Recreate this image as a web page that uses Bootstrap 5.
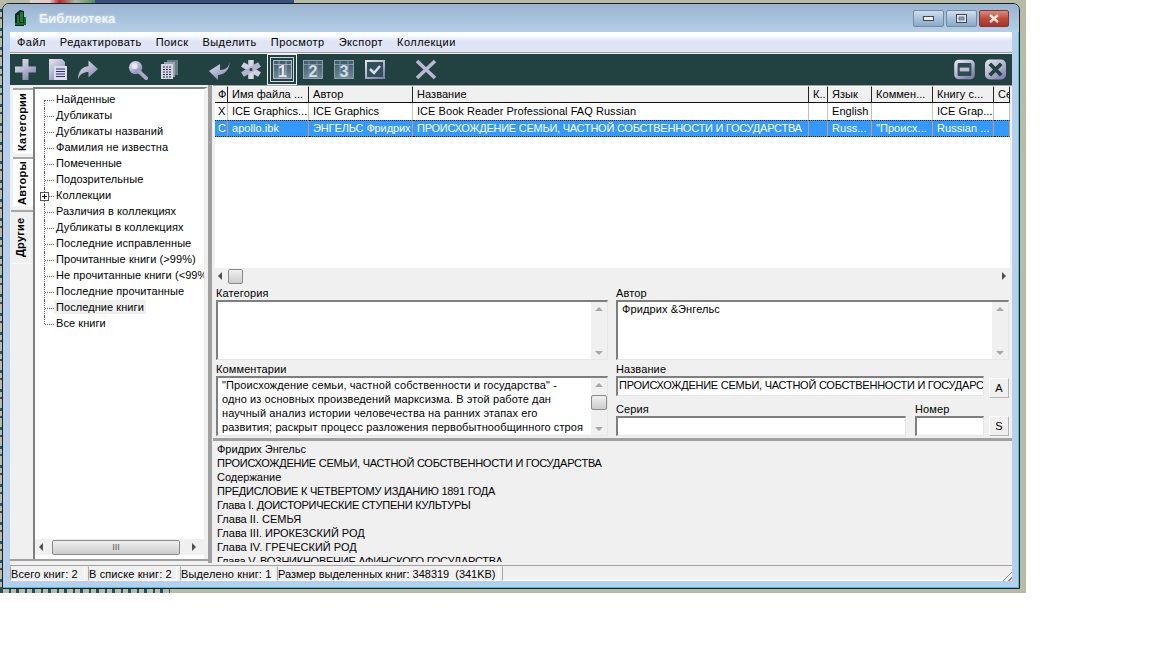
<!DOCTYPE html>
<html lang="ru">
<head>
<meta charset="utf-8">
<title>Библиотека</title>
<link href="https://cdn.jsdelivr.net/npm/bootstrap@5.3.0/dist/css/bootstrap.min.css" rel="stylesheet">
<style>
html,body{margin:0;background:#fff;}
body{font:11px/14px "Liberation Sans",Arial,sans-serif;color:#000;width:1152px;height:648px;overflow:hidden;}
.desk{position:relative;width:1026px;height:593px;background:#b8bca6;padding:3px 0 0 2px;overflow:hidden;}
.bg-left{position:absolute;left:0;top:0;width:2px;height:593px;background:repeating-linear-gradient(180deg,#b8bca6 0 9px,#1f5a66 9px 12px,#b8bca6 12px 17px,#33505c 17px 19px);}
.bg-top1{position:absolute;left:30px;top:0;width:65px;height:3px;background:linear-gradient(90deg,#d9d6cc,#e8c8c8 30%,#b22a2a 45%,#a8b8a0 70%,#4e8a5a);}
.bg-top2{position:absolute;left:95px;top:0;width:199px;height:3px;background:#35507a;}
.bg-bot{position:absolute;left:0;top:589px;width:170px;height:4px;background:repeating-linear-gradient(90deg,#1f4f60 0 3px,#b8bca6 3px 9px,#1f4f60 9px 11px,#b8bca6 11px 16px);}
.win{position:relative;width:1018px;height:586px;border:1px solid #1a2026;border-radius:7px 7px 0 0;background:#b6cfec;box-shadow:inset -1px -1px 0 #3fc6e0;padding:0 7px;}
.cap{height:28px;background:linear-gradient(180deg,#9ab4cf,#b5cfe9);margin:0 -7px;padding:0 10px 0 11px;border-radius:6px 6px 0 0;}
.cap-title{font-size:13px;font-weight:700;color:#eef4fa;margin-left:12px;text-shadow:0 0 3px #cfe0f0;padding-top:1px;}
.ctl{height:17px;border:1px solid #6f8aa3;border-radius:2px;background:linear-gradient(180deg,#cfdfee,#a9c2da 50%,#8ca9c4);}
.ctl-min{width:31px;}.ctl-max{width:31px;margin-left:2px;}
.ctl-close{width:30px;margin-left:2px;background:linear-gradient(180deg,#d98c80,#c04a3c 50%,#a83428);border-color:#7c3a34;}
.client{width:1002px;height:549px;background:#f0f0f0;}
.menu{height:20px;background:linear-gradient(180deg,#fff 0,#fff 3px,#dfe5f5 9px,#dfe5f5 100%);font-size:11px;}
.menu span{padding:0 7px;letter-spacing:.45px;line-height:21px;}
.menu-sep{height:2px;background:linear-gradient(180deg,#9d9d9d 0 1px,#f0f0f0 1px);}
.tools{height:31px;background:#224242;padding:0 6px 0 5px;}
.tools svg{display:block;flex:none;}
.m-6{margin-left:6px}.m-9{margin-left:9px}.m-10{margin-left:10px}.m-11{margin-left:11px}.m-12{margin-left:12px}.m-13{margin-left:13px}.m-30{margin-left:30px}.m-31{margin-left:31px}
.pressed{width:30px;height:31px;border:1px solid #e9eef0;box-shadow:inset 0 0 0 2px #224242,inset 0 0 0 3px #cfd8dc;margin-left:5px;}
.main{height:480px;}
.left{width:198px;height:476px;border-bottom:2px solid #a0a0a0;}
.tabs{width:23px;padding-top:3px;}
.vt{width:20px;margin-left:3px;background:#fff;border-top:1px solid #f8f8f8;border-bottom:2px solid #a8a8a8;writing-mode:vertical-rl;transform:rotate(180deg);text-align:center;font-weight:700;letter-spacing:.25px;line-height:18px;}
.vt-1{height:66px;}.vt-2{height:50px;margin-top:3px;}
.vt-3{height:54px;margin-left:1px;width:22px;background:#f0f0f0;margin-top:3px;}
.tree{width:175px;height:472px;margin-top:2px;border-top:2px solid #7f7f7f;border-left:2px solid #7f7f7f;border-right:4px solid #f0f0f0;background:#fff;}
.tree-list{list-style:none;margin:0;padding:3px 0 0 0;flex:1 1 auto;position:relative;}
.tree-list li{position:relative;height:16px;line-height:15px;padding-left:21px;letter-spacing:.07px;white-space:nowrap;width:169px;}
.tree-list li::before{content:"";position:absolute;left:9px;top:0;height:16px;border-left:1px dotted #666;}
.tree-list li:first-child::before{top:8px;height:8px;}
.tree-list li:last-child::before{height:8px;}
.tree-list li::after{content:"";position:absolute;left:10px;top:8px;width:9px;border-top:1px dotted #666;}
.tree-list li b{font-weight:400;padding:1px 2px;margin-left:-2px;}
.cur{background:#f0f0f0;}
.plus{position:absolute;z-index:2;left:5px;top:4px;width:9px;height:9px;border:1px solid #555;background:linear-gradient(#000,#000) center/1px 5px no-repeat,linear-gradient(#000,#000) center/5px 1px no-repeat,#fff;}
.hsb{height:16px;background:#f0f0f0;}
.arr-l,.arr-r,.arr-u,.arr-d{width:0;height:0;flex:none;}
.arr-l{border:4px solid transparent;border-left:0;border-right:4px solid #505050;}
.arr-r{border:4px solid transparent;border-right:0;border-left:4px solid #505050;}
.arr-u{border:4px solid transparent;border-top:0;border-bottom:4px solid #a8a8a8;}
.arr-d{border:4px solid transparent;border-bottom:0;border-top:4px solid #a8a8a8;margin-top:auto;}
.thumb{height:15px;border:1px solid #8a8a8a;border-radius:2px;background:linear-gradient(180deg,#f0f0f0,#cccccc);}
.thumb-long{width:128px;margin-left:9px;text-align:center;line-height:12px;font-size:9px;color:#555;}
.thumb-sm{width:15px;margin-left:6px;}
.thumb-c{margin-top:8px;}
.split{width:5px;background:linear-gradient(90deg,#a0a0a0 0 4px,#f0f0f0 4px);height:478px;}
.right{width:799px;}
.grid-wrap{height:183px;background:#f0f0f0;padding:0 2px;border-top:1px solid #a0a0a0;}
.grid-in{height:182px;background:#fff;overflow:hidden;}
table.g{table-layout:fixed;width:795px;border-collapse:separate;border-spacing:0;margin:0;}
table.g col.c1{width:13px}table.g col.c2{width:81px}table.g col.c3{width:104px}table.g col.c4{width:396px}table.g col.c5{width:19px}table.g col.c6{width:44px}table.g col.c7{width:61px}table.g col.c8{width:61px}table.g col.c9{width:16px}
table.g th,table.g td{font-weight:400;padding:0 0 0 4px;height:17px;line-height:15px;white-space:nowrap;overflow:hidden;letter-spacing:.05px;}
table.g th:first-child,table.g td:first-child{padding-left:3px;}
table.g th{background:#f0f0f0;border-right:1px solid #222;border-bottom:1px solid #111;border-top:1px solid #fff;}
table.g td{border-right:1px solid #c0c0c0;}
table.g tr.sel td{background:#3399ff;color:#fff;border-right-color:#d09a70;border-top:1px dotted #222;border-bottom:1px dotted #222;}
.caps{letter-spacing:-.25px;}
.caps-s{letter-spacing:-.12px;}
.hsb2{height:16px;background:#f0f0f0;padding-left:5px;padding-right:6px;}
.form{height:154px;padding-left:3px;}
.fl{width:392px;}.fr{width:393px;margin-left:8px;}
.lab{height:16px;padding-top:2px;line-height:14px;letter-spacing:.12px;}
.lab2{height:14px;margin-top:2px;line-height:14px;letter-spacing:.12px;}
.lab3{height:14px;margin-top:6px;line-height:14px;letter-spacing:.12px;}
.box{border-top:2px solid #7f7f7f;border-left:2px solid #7f7f7f;border-right:1px solid #e6e6e6;border-bottom:1px solid #e6e6e6;background:#fff;}
.area{height:60px;overflow:hidden;}
.area-txt{padding:0 0 0 4px;line-height:14px;letter-spacing:.1px;white-space:nowrap;}
.vsb{width:16px;flex:none;background:#f0f0f0;padding:5px 0 4px;}
.inp{height:20px;line-height:15px;overflow:hidden;white-space:nowrap;padding-left:1px;}
.inp-n{width:368px;}.inp-s{width:290px;}.inp-c{width:69px;margin-left:9px;}
.row20{height:20px;}
.sq{width:20px;height:20px;margin-left:5px;background:#f0f0f0;border:1px solid #b5b5b5;border-top-color:#fff;border-left-color:#fff;text-align:center;line-height:19px;}
.sq-a{margin-top:2px;}
.l-c{width:299px;}
.hs{height:3px;background:#a0a0a0;}
.pane{height:121px;padding:1px 0 0 4px;overflow:hidden;line-height:14px;white-space:nowrap;background:#f0f0f0;}
.status{height:16px;border-top:1px solid #a0a0a0;position:relative;}
.status .p{height:15px;line-height:14px;margin-right:3px;border-left:1px solid #a8a8a8;border-top:1px solid #f0f0f0;border-right:1px solid #fff;border-bottom:1px solid #fff;letter-spacing:.12px;white-space:nowrap;overflow:hidden;flex:none;}
.status .p4{letter-spacing:-.02px;}
.p1{width:75px}.p2{width:89px}.p3{width:94px}.p4{width:222px}.p5{width:510px;margin-right:0!important}
.grip{position:absolute;right:0;bottom:0;width:12px;height:12px;background:repeating-linear-gradient(135deg,transparent 0 2px,#8f8f8f 2px 3px,transparent 3px 4px);clip-path:polygon(100% 0,100% 100%,0 100%);}
</style>
</head>
<body>
<svg width="0" height="0" class="position-absolute"><defs>
<linearGradient id="ic" x1="0" y1="0" x2="0.7" y2="1"><stop offset="0" stop-color="#e6e6ee"/><stop offset="0.55" stop-color="#b6b6d2"/><stop offset="1" stop-color="#8484b0"/></linearGradient>
<linearGradient id="ik" x1="0" y1="0" x2="0" y2="1"><stop offset="0" stop-color="#3a5a68"/><stop offset="1" stop-color="#6f8894"/></linearGradient>
</defs></svg>
<div class="desk">
  <div class="bg-left"></div><div class="bg-top1"></div><div class="bg-top2"></div><div class="bg-bot"></div>
  <div class="win">
    <div class="cap d-flex align-items-center">
      <svg width="13" height="18" viewBox="0 0 13 18"><path d="M1 5 L6 1 L10 2 V17 H1Z" fill="#0f2a1a"/><path d="M3 6 H5 V14 H3Z M6 3 L9 3 V13 H6Z" fill="#177a3c"/><path d="M1 16 H12 V8 H10 V14 H1Z" fill="#126a32"/></svg>
      <span class="cap-title">Библиотека</span>
      <div class="ms-auto d-flex">
        <div class="ctl ctl-min d-flex align-items-center justify-content-center"><svg width="11" height="5"><rect x=".5" y=".5" width="10" height="4" fill="#e8eef4" stroke="#445"/></svg></div>
        <div class="ctl ctl-max d-flex align-items-center justify-content-center"><svg width="11" height="9"><rect x=".5" y=".5" width="10" height="8" fill="#dde6f0" stroke="#445"/><rect x="3" y="3" width="5" height="3" fill="#8ca9c4" stroke="#445" stroke-width=".6"/></svg></div>
        <div class="ctl ctl-close d-flex align-items-center justify-content-center"><svg width="12" height="9" viewBox="0 0 12 9"><path d="M2 1 L10 8 M10 1 L2 8" stroke="#f1e6e0" stroke-width="2.4"/></svg></div>
      </div>
    </div>
    <div class="client">
      <div class="menu d-flex"><span>Файл</span><span>Редактировать</span><span>Поиск</span><span>Выделить</span><span>Просмотр</span><span>Экспорт</span><span>Коллекции</span></div>
      <div class="menu-sep"></div>
      <div class="tools d-flex align-items-center">
        <svg width="21" height="21" viewBox="0 0 21 21"><path d="M7.5 0h6v7.5H21v6h-7.5V21h-6v-7.5H0v-6h7.5z" fill="url(#ic)"/></svg>
        <svg class="m-12" width="19" height="21" viewBox="0 0 19 21"><path d="M1 0h13l3 3v4H6v14H1z" fill="url(#ic)"/><path d="M6 7h13v14H6z" fill="#dcdcec"/><path d="M8 10h9M8 12.5h9M8 15h9M8 17.5h9" stroke="#2e2e6a" stroke-width="1"/></svg>
        <svg class="m-10" width="21" height="21" viewBox="0 0 22 21"><path d="M1 21C1 11 7 7 12 7V1l10 9-10 9v-6C7 13 3 15 1 21z" fill="url(#ic)"/></svg>
        <svg class="m-30" width="20" height="20" viewBox="0 0 21 20"><circle cx="8" cy="7.5" r="7" fill="url(#ic)"/><circle cx="7" cy="6" r="3" fill="#e8e8f2"/><path d="M12 12l7 6.5" stroke="#a8a8c8" stroke-width="4" stroke-linecap="round"/></svg>
        <svg class="m-13" width="17" height="19" viewBox="0 0 17 19"><rect x="6" y="0" width="11" height="15" fill="#6a7c8a"/><rect x="3" y="2" width="11" height="15" fill="#9aa4b0"/><rect x="0" y="4" width="12" height="15" fill="#d6d6e2"/><path d="M2 7h8M2 9.5h8M2 12h8M2 14.500h8M2 17h8" stroke="#2a2a50" stroke-width="1" stroke-dasharray="2 1"/></svg>
        <svg class="m-31" width="22" height="21" viewBox="0 0 22 21"><path d="M21 1C21 8 16 11 11 11V5L0 12l9 9v-5c6 0 12-5 12-15z" fill="url(#ic)"/></svg>
        <svg class="m-9" width="22" height="21" viewBox="0 0 22 21"><path d="M11 1V20" stroke="#d6d6e6" stroke-width="5.500"/><path d="M2.500 5.500L19.500 15.500" stroke="#d0d0e2" stroke-width="5.500"/><path d="M19.500 5.500L2.500 15.500" stroke="#b4b4d0" stroke-width="5.500"/><circle cx="11" cy="10.500" r="1.500" fill="#224242"/></svg>
        <div class="pressed d-flex align-items-center justify-content-center">
          <svg width="19" height="19" viewBox="0 0 19 19"><rect x=".5" y=".5" width="18" height="18" fill="url(#ik)" stroke="#b6b6d2"/><path d="M0 4.500H19M6 0V19M13 0V19" stroke="#b6b6d2" stroke-width=".8"/><text x="9.500" y="17" text-anchor="middle" font-family="Liberation Sans" font-weight="700" font-size="16" fill="#e6e6ee">1</text></svg>
        </div>
        <svg class="m-6" width="20" height="19" viewBox="0 0 20 19"><rect x=".5" y=".5" width="19" height="18" fill="url(#ik)" stroke="#8ca0b4"/><path d="M0 4.500H20M6 0V19M14 0V19" stroke="#8ca0b4" stroke-width=".8"/><text x="10" y="17" text-anchor="middle" font-family="Liberation Sans" font-weight="700" font-size="16" fill="#d8dce8">2</text></svg>
        <svg class="m-11" width="20" height="19" viewBox="0 0 20 19"><rect x=".5" y=".5" width="19" height="18" fill="url(#ik)" stroke="#8ca0b4"/><path d="M0 4.500H20M6 0V19M14 0V19" stroke="#8ca0b4" stroke-width=".8"/><text x="10" y="17" text-anchor="middle" font-family="Liberation Sans" font-weight="700" font-size="16" fill="#d8dce8">3</text></svg>
        <svg class="m-11" width="20" height="19" viewBox="0 0 20 19"><rect x="1" y="1" width="18" height="17" fill="#30505a" stroke="url(#ic)" stroke-width="2"/><path d="M5 9l4 4 6-7" fill="none" stroke="#dcdcec" stroke-width="2.500"/></svg>
        <svg class="m-30" width="22" height="21" viewBox="0 0 22 21"><path d="M2 2L20 19M20 2L2 19" stroke="#b8b8d4" stroke-width="3.600"/></svg>
        <div class="ms-auto d-flex align-items-center">
          <svg width="21" height="21" viewBox="0 0 22 21"><rect x="2" y="2" width="18" height="17" rx="3" fill="#2f4c50" stroke="url(#ic)" stroke-width="3.500"/><rect x="6" y="8.500" width="10" height="4" fill="#c0c0d6"/></svg>
          <svg class="m-10" width="21" height="21" viewBox="0 0 22 21"><rect x="0" y="0" width="22" height="21" rx="5" fill="url(#ic)"/><path d="M5 4.500L17 16.500M17 4.500L5 16.500" stroke="#224242" stroke-width="4"/></svg>
        </div>
      </div>
      <div class="main d-flex">
        <div class="left d-flex">
          <div class="tabs d-flex flex-column">
            <div class="vt vt-1">Категории</div>
            <div class="vt vt-2">Авторы</div>
            <div class="vt vt-3">Другие</div>
          </div>
          <div class="tree d-flex flex-column">
            <ul class="tree-list">
              <li>Найденные</li><li>Дубликаты</li><li>Дубликаты названий</li><li>Фамилия не известна</li><li>Помеченные</li><li>Подозрительные</li>
              <li><span class="plus"></span>Коллекции</li>
              <li>Различия в коллекциях</li><li>Дубликаты в коллекциях</li><li>Последние исправленные</li><li>Прочитанные книги (&gt;99%)</li><li class="overflow-hidden">Не прочитанные книги (&lt;99%)</li><li>Последние прочитанные</li><li><b class="cur">Последние книги</b></li><li>Все книги</li>
            </ul>
            <div class="hsb d-flex align-items-center mb-1">
              <span class="arr-l ms-1"></span>
              <div class="thumb thumb-long">III</div>
              <span class="arr-r ms-auto me-2"></span>
            </div>
          </div>
        </div>
        <div class="split"></div>
        <div class="right d-flex flex-column">
          <div class="grid-wrap"><div class="grid-in">
            <table class="g">
              <colgroup><col class="c1"><col class="c2"><col class="c3"><col class="c4"><col class="c5"><col class="c6"><col class="c7"><col class="c8"><col class="c9"></colgroup>
              <thead><tr><th>Ф</th><th>Имя файла ...</th><th>Автор</th><th>Название</th><th>К..</th><th>Язык</th><th>Коммен...</th><th>Книгу с...</th><th>Се</th></tr></thead>
              <tbody>
                <tr><td>Х</td><td>ICE Graphics...</td><td>ICE Graphics</td><td>ICE Book Reader Professional FAQ Russian</td><td></td><td>English</td><td></td><td>ICE Grap...</td><td></td></tr>
                <tr class="sel"><td>C</td><td>apollo.ibk</td><td><span class="caps-s">ЭНГЕЛЬС Фридрих</span></td><td><span class="caps">ПРОИСХОЖДЕНИЕ СЕМЬИ, ЧАСТНОЙ СОБСТВЕННОСТИ И ГОСУДАРСТВА</span></td><td></td><td>Russ...</td><td>"Происх...</td><td>Russian ...</td><td></td></tr>
              </tbody>
            </table>
          </div></div>
          <div class="hsb2 d-flex align-items-center">
            <span class="arr-l"></span>
            <div class="thumb thumb-sm"></div>
            <span class="arr-r ms-auto"></span>
          </div>
          <div class="form d-flex">
            <div class="fl">
              <div class="lab">Категория</div>
              <div class="box area d-flex"><div class="flex-grow-1"></div><div class="vsb d-flex flex-column align-items-center"><span class="arr-u"></span><span class="arr-d"></span></div></div>
              <div class="lab2">Комментарии</div>
              <div class="box area d-flex"><div class="flex-grow-1 area-txt">"Происхождение семьи, частной собственности и государства" -<br>одно из основных произведений марксизма. В этой работе дан<br>научный анализ истории человечества на ранних этапах его<br>развития; раскрыт процесс разложения первобытнообщинного строя</div>
                <div class="vsb d-flex flex-column align-items-center"><span class="arr-u"></span><div class="thumb thumb-c w-100"></div><span class="arr-d"></span></div></div>
            </div>
            <div class="fr">
              <div class="lab">Автор</div>
              <div class="box area d-flex"><div class="flex-grow-1 area-txt">Фридрих &amp;Энгельс</div><div class="vsb d-flex flex-column align-items-center"><span class="arr-u"></span><span class="arr-d"></span></div></div>
              <div class="lab2">Название</div>
              <div class="d-flex row20">
                <div class="box inp inp-n"><span class="caps">ПРОИСХОЖДЕНИЕ СЕМЬИ, ЧАСТНОЙ СОБСТВЕННОСТИ И ГОСУДАРСТВА</span></div>
                <div class="sq sq-a">A</div>
              </div>
              <div class="d-flex lab3"><div class="l-c">Серия</div><div>Номер</div></div>
              <div class="d-flex row20">
                <div class="box inp inp-s"></div>
                <div class="box inp inp-c"></div>
                <div class="sq">S</div>
              </div>
            </div>
          </div>
          <div class="hs"></div>
          <div class="pane">Фридрих Энгельс<br><span class="caps">ПРОИСХОЖДЕНИЕ СЕМЬИ, ЧАСТНОЙ СОБСТВЕННОСТИ И ГОСУДАРСТВА</span><br>Содержание<br><span class="caps">ПРЕДИСЛОВИЕ К ЧЕТВЕРТОМУ ИЗДАНИЮ 1891 ГОДА</span><br><span class="caps">Глава I. ДОИСТОРИЧЕСКИЕ СТУПЕНИ КУЛЬТУРЫ</span><br>Глава II. СЕМЬЯ<br>Глава III. ИРОКЕЗСКИЙ РОД<br>Глава IV. ГРЕЧЕСКИЙ РОД<br><span class="caps">Глава V. ВОЗНИКНОВЕНИЕ АФИНСКОГО ГОСУДАРСТВА</span></div>
        </div>
      </div>
      <div class="status d-flex">
        <div class="p p1">Всего книг: 2</div><div class="p p2">В списке книг: 2</div><div class="p p3">Выделено книг: 1</div><div class="p p4">Размер выделенных книг: 348319&nbsp; (341KB)</div><div class="p p5"></div>
        <div class="grip"></div>
      </div>
    </div>
  </div>
</div>
<script src="https://cdn.jsdelivr.net/npm/bootstrap@5.3.0/dist/js/bootstrap.bundle.min.js"></script>
</body>
</html>
